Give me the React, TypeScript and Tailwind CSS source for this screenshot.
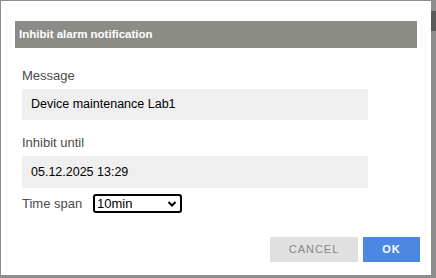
import React from "react";

export default function App() {
  return (
    <div
      className="w-[436px] h-[278px] bg-[#8d8d8d] relative overflow-hidden pt-px pl-px"
      style={{ fontFamily: '"Liberation Sans", Arial, sans-serif' }}
    >
      <div className="absolute right-0 top-[11px] w-[5px] h-[20px] bg-[#5a5a5a]" />
      <div className="w-[430px] h-[274px] bg-white flex flex-col pt-[20px] px-[14px] relative">
        <div className="h-[27px] bg-[#8c8c87] flex items-center pl-[4px] text-white font-bold text-[11.5px]">
          Inhibit alarm notification
        </div>
        <div className="pl-[7px] pr-[50px] flex flex-col">
          <div className="mt-[20px] text-[13px] text-[#4a4a4a] leading-[15px]">Message</div>
          <div className="mt-[6px] h-[31px] w-[346px] bg-[#efefef] flex items-center pl-[9px] text-[12.5px] text-black">
            Device maintenance Lab1
          </div>
          <div className="mt-[15px] text-[13px] text-[#4a4a4a] leading-[15px]">Inhibit until</div>
          <div className="mt-[6px] h-[32px] w-[346px] bg-[#efefef] flex items-center pl-[9px] text-[12.5px] text-black">
            05.12.2025 13:29
          </div>
          <div className="mt-[6px] flex items-center">
            <span className="text-[13px] text-[#4a4a4a] w-[71px]">Time span</span>
            <div className="w-[89px] h-[19px] border-2 border-black rounded-[3px] flex items-center justify-between pl-[2px] pr-[3px] text-[13px] text-black">
              <span>10min</span>
              <svg width="10" height="8" viewBox="0 0 10 8">
                <path d="M1.5 2 L5 5.5 L8.5 2" stroke="black" strokeWidth="2" fill="none" />
              </svg>
            </div>
          </div>
        </div>
        <div className="mt-[23px] flex justify-end gap-[5px] mr-[-3px]">
          <div className="w-[88px] h-[25px] bg-[#e0e0e0] flex items-center justify-center text-[11px] text-[#888] tracking-[1px]">
            CANCEL
          </div>
          <div className="w-[57px] h-[25px] bg-[#4a88e2] flex items-center justify-center text-[11px] text-white font-bold tracking-[1px]">
            OK
          </div>
        </div>
      </div>
    </div>
  );
}
